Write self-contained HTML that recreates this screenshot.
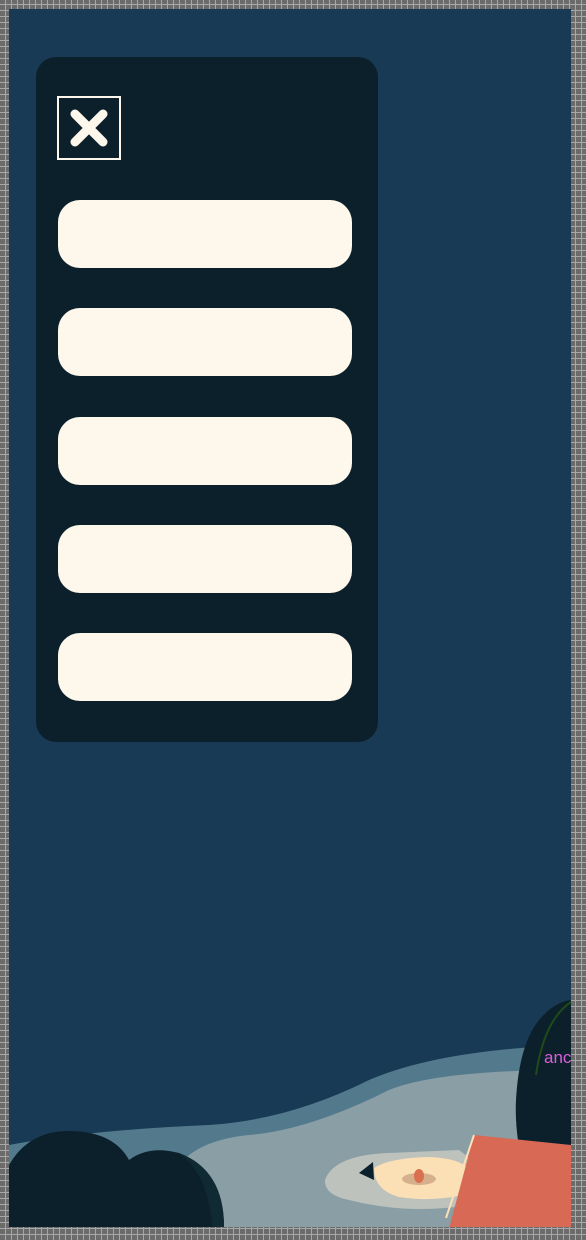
<!DOCTYPE html>
<html><head><style>
html,body{margin:0;padding:0;}
body{width:586px;height:1240px;position:relative;overflow:hidden;
background:#6b6b6b;
background-image:repeating-linear-gradient(90deg,transparent 0 5px,#a8a8a8 5px 6px),repeating-linear-gradient(0deg,transparent 0 5px,#a8a8a8 5px 6px);}
#in{position:absolute;left:9px;top:9px;width:562px;height:1218px;background:#183a55;overflow:hidden;}
#panel{position:absolute;left:27px;top:48px;width:342px;height:685px;background:#0c202b;border-radius:20px;}
#close{position:absolute;left:21px;top:39px;width:60px;height:60px;border:2px solid #fdf7ec;}
.b{position:absolute;left:22px;width:294px;height:68px;background:#fdf7ec;border-radius:22px;}
</style></head><body>
<div id="in">
<div id="panel">
<div id="close"><svg width="60" height="60"><g stroke="#fdf7ec" stroke-width="9" stroke-linecap="round"><line x1="16" y1="16" x2="44" y2="44"/><line x1="44" y1="16" x2="16" y2="44"/></g></svg></div>
<div class="b" style="top:143px"></div>
<div class="b" style="top:251px"></div>
<div class="b" style="top:360px"></div>
<div class="b" style="top:468px"></div>
<div class="b" style="top:576px"></div>
</div>
<svg style="position:absolute;left:0;top:981px" width="562" height="237">
<path d="M0 155 Q80 140 200 135 Q280 130 360 90 Q430 60 562 55 L562 237 L0 237Z" fill="#527a8c"/>
<path d="M170 175 Q190 150 240 145 Q300 140 380 100 Q430 80 562 80 L562 237 L170 237Z" fill="#8a9ea6"/>
<path d="M316 190 Q325 165 380 163 L450 160 L470 175 L460 215 Q400 225 340 210 Q315 205 316 190Z" fill="#bec2bc"/>
<path d="M365 178 Q380 168 420 167 Q450 168 462 180 L455 205 Q420 212 390 207 Q365 200 365 178Z" fill="#fbdfb5"/>
<ellipse cx="410" cy="189" rx="17" ry="6" fill="#d6b08c"/>
<ellipse cx="410" cy="186" rx="5" ry="7" fill="#d9704f"/>
<path d="M350 183 L364 172 L365 190Z" fill="#0c202b"/>
<path d="M530 30 Q545 12 562 10 L562 200 L520 200 Q505 150 507 110 Q510 55 530 30Z" fill="#0c202b"/>
<path d="M438 246 L465 145 L562 155 L562 237Z" fill="#d86a55"/>
<line x1="437" y1="228" x2="465" y2="145" stroke="#fbdfb5" stroke-width="2"/>
<path d="M527 85 Q535 30 562 12" stroke="#1f4a1a" stroke-width="2" fill="none"/>
<text x="535" y="73" font-family="Liberation Sans,sans-serif" font-size="17" fill="#d95fd9">anch</text>
<path d="M0 237 L0 175 Q20 140 62 141 Q105 142 120 170 Q140 155 170 163 Q215 180 215 237Z" fill="#0c202b"/>
<path d="M170 163 Q215 180 215 237 L203 237 Q200 185 170 163Z" fill="#0f2a33"/>
</svg>
</div>
</body></html>
